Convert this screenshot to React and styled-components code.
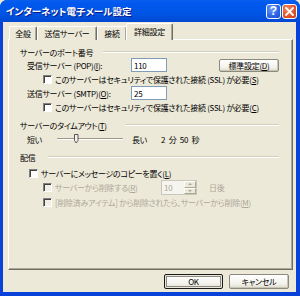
import styled, { createGlobalStyle } from "styled-components";

const GlobalStyle = createGlobalStyle`
    html, body {
        margin: 0;
        padding: 0;
        background: #ECE9D8;
    }
    * {
        box-sizing: border-box;
    }
`

const Window = styled.div`
    width: 300px;
    height: 296px;
    display: flex;
    flex-direction: column;
    background: #0842D8;
    border-radius: 7px 7px 0 0;
    overflow: hidden;
    font-family: "Noto Sans CJK JP", "Noto Sans", sans-serif;
    font-feature-settings: "palt";
    font-size: 8px;
    letter-spacing: -0.3px;
    color: #000;
`
const TitleBar = styled.div`
    height: 22px;
    flex-shrink: 0;
    display: flex;
    align-items: center;
    justify-content: space-between;
    padding: 0 3px 0 6px;
    background: linear-gradient(#0A5FEF 0%, #0058EE 15%, #0055E5 60%, #0048D2 100%);
`
const Title = styled.div`
    color: #fff;
    font-weight: bold;
    font-size: 9.5px;
    letter-spacing: 0;
    text-shadow: 1px 1px 0 #0A1883;
`
const CapButtons = styled.div`
    display: flex;
    gap: 1px;
`
const CapButton = styled.div`
    width: 15px;
    height: 15px;
    border: 1px solid #fff;
    border-radius: 3px;
    display: flex;
    align-items: center;
    justify-content: center;
    color: #fff;
    font-family: "Liberation Sans", sans-serif;
    font-weight: bold;
    font-size: 12px;
    letter-spacing: 0;
    background: ${p => p.danger
        ? "radial-gradient(circle at 35% 30%, #F08A60, #E0512A 60%, #C4401E)"
        : "radial-gradient(circle at 35% 30%, #6A9BFA, #2B63E4 60%, #1E4FCF)"};
`
const Body = styled.div`
    flex: 1;
    margin: 0 4px 4px 3px;
    padding: 1px 3px 0 5px;
    background: #ECE9D8;
    display: flex;
    flex-direction: column;
`
const Tabs = styled.div`
    display: flex;
    align-items: flex-end;
    height: 17px;
    padding-left: 1px;
    position: relative;
    z-index: 1;
    margin-bottom: -1px;
`
const Tab = styled.div`
    width: ${p => p.w}px;
    height: ${p => p.active ? 17 : 14}px;
    margin: ${p => p.active ? "0 -1px 0 -1px" : "0"};
    display: flex;
    align-items: center;
    justify-content: center;
    background: #ECE9D8;
    border-top: 1px solid #fff;
    border-left: 1px solid #fff;
    border-right: 1px solid #716F64;
    border-radius: 2px 2px 0 0;
    box-shadow: inset -1px 0 0 #ACA899;
    padding-bottom: ${p => p.active ? 1 : 0}px;
`
const Panel = styled.div`
    height: 231px;
    border-top: 1px solid #fff;
    border-left: 1px solid #fff;
    border-right: 1px solid #716F64;
    border-bottom: 1px solid #716F64;
    box-shadow: inset -1px -1px 0 #ACA899;
    padding: 6px 13px 0 11px;
    display: flex;
    flex-direction: column;
`
const Header = styled.div`
    display: flex;
    align-items: center;
    height: ${p => p.h || 14}px;
    margin-top: ${p => p.mt || 0}px;
`
const HeaderLabel = styled.div`
    width: ${p => p.w}px;
    flex-shrink: 0;
    white-space: nowrap;
`
const Rule = styled.div`
    flex: 1;
    border-top: 1px solid #D0D0BF;
    border-bottom: 1px solid #fff;
`
const Row = styled.div`
    display: flex;
    align-items: center;
    height: ${p => p.h || 14}px;
    margin-top: ${p => p.mt || 0}px;
    padding-left: ${p => p.indent || 0}px;
    color: ${p => p.disabled ? "#ACA899" : "#000"};
    white-space: nowrap;
`
const Label = styled.div`
    width: ${p => p.w}px;
    padding-left: ${p => p.pl || 0}px;
    flex-shrink: 0;
`
const U = styled.span`
    text-decoration: underline;
`
const Duration = styled.span`
    word-spacing: 2px;
`
const TextBox = styled.div`
    width: 36px;
    height: 14px;
    border: 1px solid #7F9DB9;
    background: #fff;
    padding-left: 2px;
    display: flex;
    align-items: center;
`
const PushButton = styled.div`
    width: ${p => p.w}px;
    height: ${p => p.h}px;
    margin-left: ${p => p.ml || 0}px;
    display: flex;
    align-items: center;
    justify-content: center;
    border: 1px solid ${p => p.primary ? "#1A1A1A" : "#8C8A7E"};
    border-radius: 2px;
    background: linear-gradient(#FFFFFF, #F2F1EA 70%, #DDDACB);
    box-shadow: ${p => p.primary ? "inset 0 0 0 1px #E8E6DA, inset 0 0 0 2px #8C8A7E" : "inset -1px -1px 0 #C9C6B6"};
    white-space: nowrap;
`
const Check = styled.span`
    width: 9px;
    height: 9px;
    flex-shrink: 0;
    margin-right: 3px;
    border: 1px solid;
    border-color: #808080 #fff #fff #808080;
    box-shadow: inset 1px 1px 0 #404040;
    background: ${p => p.disabled ? "#F1EFE5" : "#fff"};
`
const Track = styled.div`
    width: 66px;
    height: 2px;
    border-top: 1px solid #9D9A8C;
    border-bottom: 1px solid #fff;
    position: relative;
`
const Thumb = styled.svg`
    position: absolute;
    left: 17px;
    top: -5px;
`
const Spin = styled.div`
    width: 36px;
    height: 15px;
    display: flex;
    border: 1px solid #C9C7BA;
    background: #F5F4EE;
    color: #ACA899;
`
const SpinText = styled.div`
    flex: 1;
    padding-left: 2px;
    display: flex;
    align-items: center;
`
const SpinButtons = styled.div`
    width: 12px;
    display: flex;
    flex-direction: column;
`
const SpinHalf = styled.div`
    flex: 1;
    display: flex;
    align-items: center;
    justify-content: center;
    background: #ECE9D8;
    border: 1px solid #fff;
    border-right-color: #ACA899;
    border-bottom-color: #ACA899;
    &::after {
        content: "";
        border-left: 2px solid transparent;
        border-right: 2px solid transparent;
        ${p => p.down ? "border-top: 2px solid #ACA899;" : "border-bottom: 2px solid #ACA899;"}
    }
`
const Footer = styled.div`
    flex: 1;
    display: flex;
    justify-content: flex-end;
    align-items: center;
    padding-right: 4px;
    gap: 6px;
`

export default function App() {
    return (
        <>
            <GlobalStyle />
            <Window>
                <TitleBar>
                    <Title>インターネット電子メール設定</Title>
                    <CapButtons>
                        <CapButton>?</CapButton>
                        <CapButton danger>
                            <svg width="9" height="9" viewBox="0 0 9 9">
                                <path d="M1 1 L8 8 M8 1 L1 8" stroke="#fff" strokeWidth="1.8" strokeLinecap="square" />
                            </svg>
                        </CapButton>
                    </CapButtons>
                </TitleBar>
                <Body>
                    <Tabs>
                        <Tab w={28}>全般</Tab>
                        <Tab w={60}>送信サーバー</Tab>
                        <Tab w={30}>接続</Tab>
                        <Tab w={47} active>詳細設定</Tab>
                    </Tabs>
                    <Panel>
                        <Header h={12}>
                            <HeaderLabel w={83}>サーバーのポート番号</HeaderLabel>
                            <Rule />
                        </Header>
                        <Row indent={7}>
                            <Label w={104}>受信サーバー (POP)(<U>I</U>):</Label>
                            <TextBox>110</TextBox>
                            <PushButton w={60} h={13} ml={52}>標準設定(<U>D</U>)</PushButton>
                        </Row>
                        <Row indent={23}>
                            <Check />
                            このサーバーはセキュリティで保護された接続 (SSL) が必要(<U>S</U>)
                        </Row>
                        <Row indent={7}>
                            <Label w={104}>送信サーバー (SMTP)(<U>O</U>):</Label>
                            <TextBox>25</TextBox>
                        </Row>
                        <Row indent={23}>
                            <Check />
                            このサーバーはセキュリティで保護された接続 (SSL) が必要(<U>C</U>)
                        </Row>
                        <Header mt={4}>
                            <HeaderLabel w={105}>サーバーのタイムアウト(<U>T</U>)</HeaderLabel>
                            <Rule />
                        </Header>
                        <Row indent={7}>
                            <Label w={30}>短い</Label>
                            <Track>
                                <Thumb width="5" height="10" viewBox="0 0 5 10">
                                    <path d="M0.5 0.5 H4 V6.5 L2.2 9 L0.5 6.5 Z" fill="#F4F3EE" stroke="#555" strokeWidth="1" />
                                </Thumb>
                            </Track>
                            <Label w={38} pl={9}>長い</Label>
                            <Duration>2 分 50 秒</Duration>
                        </Row>
                        <Header mt={4}>
                            <HeaderLabel w={28}>配信</HeaderLabel>
                            <Rule />
                        </Header>
                        <Row indent={9} mt={2}>
                            <Check />
                            サーバーにメッセージのコピーを置く(<U>L</U>)
                        </Row>
                        <Row indent={23} h={15} disabled>
                            <Check disabled />
                            <Label w={106}>サーバーから削除する(<U>R</U>)</Label>
                            <Spin>
                                <SpinText>10</SpinText>
                                <SpinButtons>
                                    <SpinHalf />
                                    <SpinHalf down />
                                </SpinButtons>
                            </Spin>
                            <Label w={30} pl={12}>日後</Label>
                        </Row>
                        <Row indent={23} disabled>
                            <Check disabled />
                            [削除済みアイテム] から削除されたら、サーバーから削除(<U>M</U>)
                        </Row>
                    </Panel>
                    <Footer>
                        <PushButton w={59} h={15} primary>OK</PushButton>
                        <PushButton w={60} h={15}>キャンセル</PushButton>
                    </Footer>
                </Body>
            </Window>
        </>
    );
}
